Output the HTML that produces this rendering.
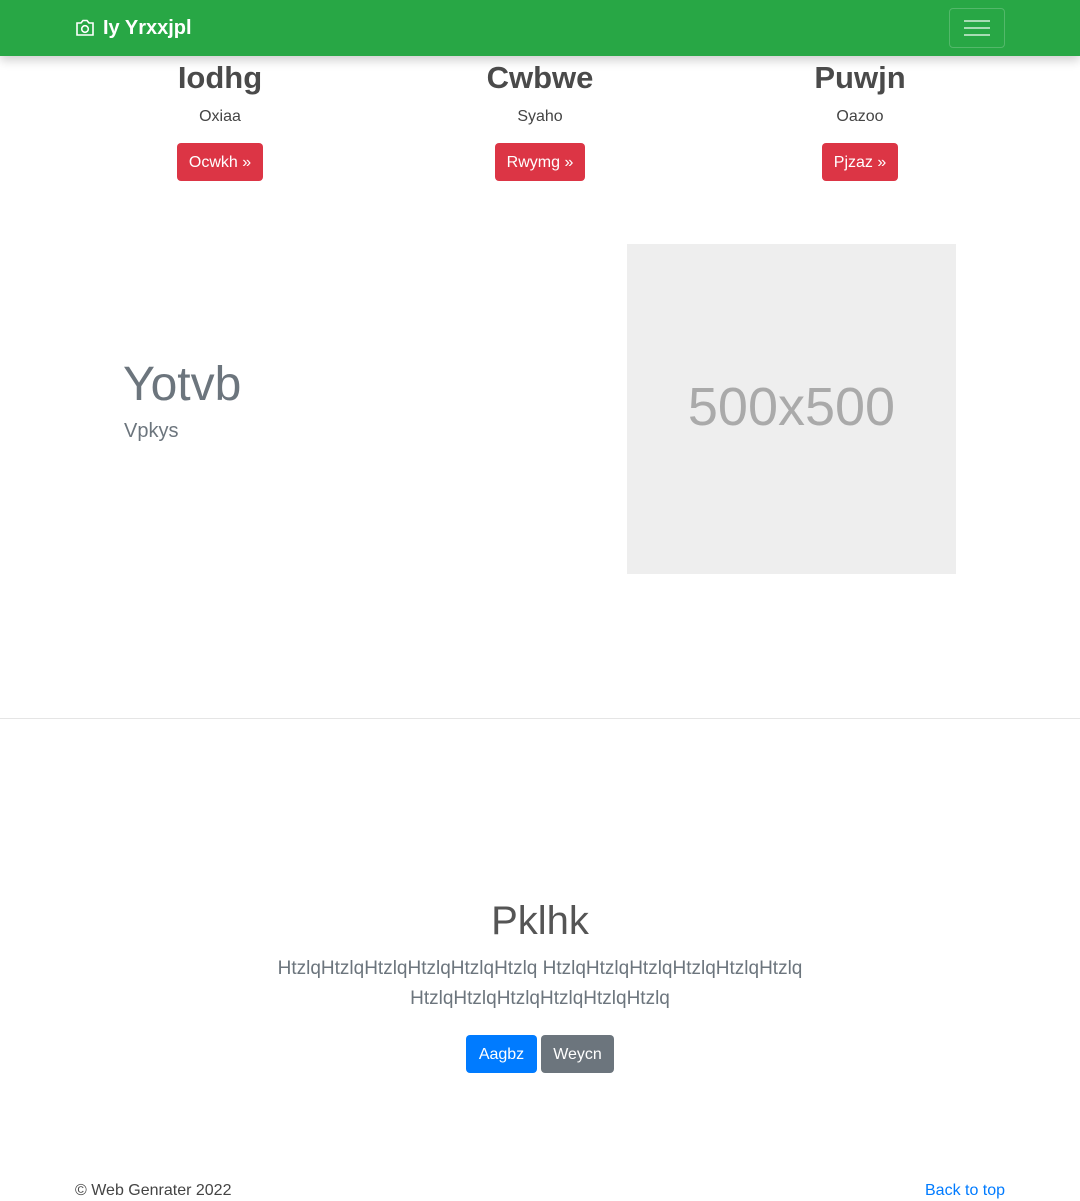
<!DOCTYPE html>
<html><head><style>
*{box-sizing:border-box;margin:0;padding:0}
body{width:1080px;height:1201px;position:relative;font-family:"Liberation Sans",sans-serif;color:#212529;background:#fff;overflow:hidden}
.a{position:absolute}
.nav{left:0;top:0;width:1080px;height:56px;background:#28a745;box-shadow:0 4px 10px rgba(0,0,0,.2)}
.col{width:320px;text-align:center}
.col h2{font-size:31px;font-weight:bold;color:#4a4a4a;line-height:38px}
.col p{font-size:16px;color:#444;margin-top:8px;line-height:24px}
.btn{display:inline-block;color:#fff;font-size:16px;line-height:24px;padding:8px 12px 6px;border-radius:4px}
.red{background:#dc3545;margin-top:14px}
</style></head><body>
<div class="a nav">
<svg class="a" style="left:75px;top:19px" width="20" height="18" viewBox="0 0 20 18" fill="none" stroke="#fff" stroke-width="1.6"><path d="M2 4h4l2-2.5h4L14 4h4v12H2z"/><circle cx="10" cy="10" r="3.3"/></svg>
<div class="a" style="left:103px;top:17px;color:#fff;font-weight:bold;font-size:20px">Iy Yrxxjpl</div>
<div class="a" style="left:949px;top:8px;width:56px;height:40px;border:1px solid rgba(255,255,255,.2);border-radius:4px">
<div class="a" style="left:14px;top:11px;width:26px;height:2px;background:rgba(255,255,255,.6)"></div>
<div class="a" style="left:14px;top:18px;width:26px;height:2px;background:rgba(255,255,255,.6)"></div>
<div class="a" style="left:14px;top:25px;width:26px;height:2px;background:rgba(255,255,255,.6)"></div>
</div></div>
<div class="a col" style="left:60px;top:59px"><h2>Iodhg</h2><p>Oxiaa</p><span class="btn red">Ocwkh »</span></div>
<div class="a col" style="left:380px;top:59px"><h2>Cwbwe</h2><p>Syaho</p><span class="btn red">Rwymg »</span></div>
<div class="a col" style="left:700px;top:59px"><h2>Puwjn</h2><p>Oazoo</p><span class="btn red">Pjzaz »</span></div>
<div class="a" style="left:123px;top:356px;font-size:48px;font-weight:300;color:#6c757d;line-height:58px">Yotvb</div>
<div class="a" style="left:124px;top:420px;font-size:20px;font-weight:300;color:#6c757d">Vpkys</div>
<div class="a" style="left:627px;top:244px;width:329px;height:330px;background:#eee;color:#aaa;font-size:54px;text-align:center;line-height:326px">500x500</div>
<div class="a" style="left:0;top:718px;width:1080px;height:1px;background:#e5e5e5"></div>
<div class="a" style="left:0;top:896px;width:1080px;text-align:center;font-size:40px;font-weight:300;color:#555;line-height:50px">Pklhk</div>
<div class="a" style="left:260px;top:954px;width:560px;text-align:center;font-size:19px;font-weight:300;color:#6c757d;line-height:30px">HtzlqHtzlqHtzlqHtzlqHtzlqHtzlq HtzlqHtzlqHtzlqHtzlqHtzlqHtzlq HtzlqHtzlqHtzlqHtzlqHtzlqHtzlq</div>
<div class="a" style="left:466px;top:1035px"><span class="btn" style="background:#007bff;width:71px;text-align:center">Aagbz</span> <span class="btn" style="background:#6c757d;width:73px;text-align:center;position:absolute;left:75px;top:0">Weycn</span></div>
<div class="a" style="left:75px;top:1182px;font-size:16px;color:#444">© Web Genrater 2022</div>
<div class="a" style="left:925px;top:1182px;font-size:16px;color:#007bff">Back to top</div>
</body></html>
